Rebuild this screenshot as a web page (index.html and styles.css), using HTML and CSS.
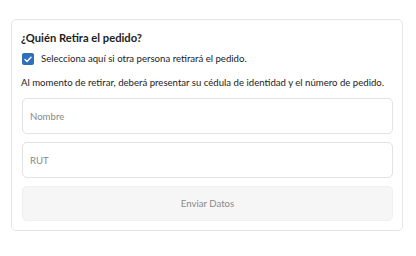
FILE: index.html
```html
<!DOCTYPE html>
<html lang="es">
<head>
<meta charset="utf-8">
<link rel="stylesheet" href="styles.css">
</head>
<body>
<div class="card">
  <h2 class="title">¿Quién Retira el pedido?</h2>
  <label class="check-row">
    <span class="checkbox"><svg width="8" height="7" viewBox="0 0 8 7"><path d="M1 3.6 L3 5.5 L7 1.2" fill="none" stroke="#fff" stroke-width="1.4" stroke-linecap="round" stroke-linejoin="round"/></svg></span>
    <span>Selecciona aquí si otra persona retirará el pedido.</span>
  </label>
  <p class="note">Al momento de retirar, deberá presentar su cédula de identidad y el número de pedido.</p>
  <div class="field">Nombre</div>
  <div class="field">RUT</div>
  <div class="button">Enviar Datos</div>
</div>
</body>
</html>
```
FILE: styles.css
```css
html, body { margin: 0; background: #fff; }
body {
  padding: 19px 13px 0 11px;
  font-family: "Lato", "Noto Sans", sans-serif;
  color: #222;
}
.card {
  border: 1px solid #e6e6e6;
  border-radius: 5px;
  padding: 10px 9px 9px 9px;
  display: flex;
  flex-direction: column;
}
.title {
  margin: 0;
  font-size: 11.2px;
  font-weight: 700;
  line-height: 16px;
}
.check-row {
  display: flex;
  align-items: center;
  gap: 7px;
  margin-top: 6px;
  margin-left: 1px;
  font-size: 9.6px;
  line-height: 14px;
}
.checkbox {
  width: 12px;
  height: 12px;
  border-radius: 2px;
  background: #2f6fba;
  display: flex;
  align-items: center;
  justify-content: center;
}
.note {
  margin: 10px 0 0 0;
  font-size: 9.6px;
  line-height: 14px;
  white-space: nowrap;
}
.field {
  margin-top: 8px;
  margin-left: 1px;
  height: 34px;
  border: 1px solid #e3e3e3;
  border-radius: 5px;
  display: flex;
  align-items: center;
  padding-left: 7px;
  font-size: 9.6px;
  color: #888;
}
.button {
  margin-top: 8px;
  margin-left: 1px;
  height: 33px;
  background: #f6f6f6;
  border: 1px solid #f0f0f0;
  border-radius: 5px;
  display: flex;
  align-items: center;
  justify-content: center;
  font-size: 9.6px;
  color: #8a8a8a;
}
```
